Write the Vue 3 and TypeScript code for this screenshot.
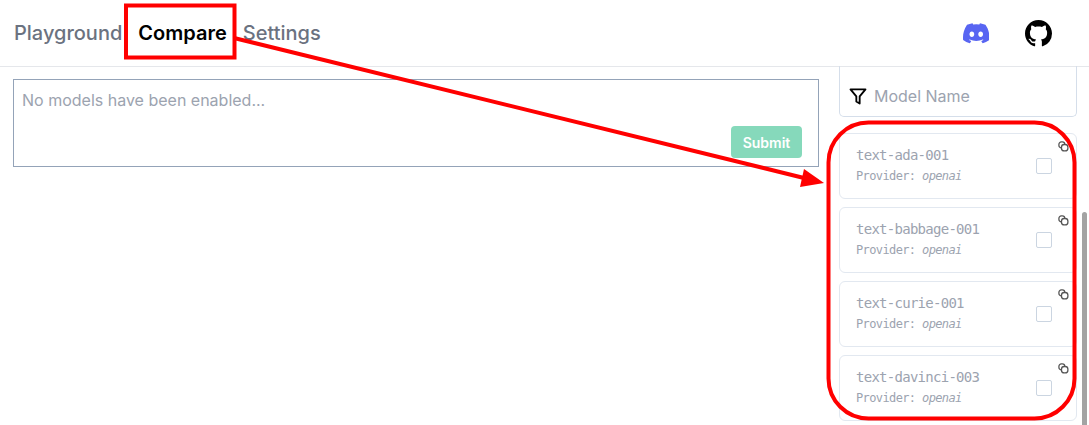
<template>
  <div class="page">
    <header class="topbar">
      <nav class="tabs">
        <a v-for="tab in tabs" :key="tab" class="tab" :class="{ 'tab--active': tab === 'Compare' }">{{ tab }}</a>
      </nav>
      <div class="socials">
        <svg class="discord" viewBox="0 0 24 24" width="26.5" height="26.5" aria-label="Discord">
          <path fill="#5865f2" d="M20.32 4.37a19.8 19.8 0 0 0-4.89-1.52.07.07 0 0 0-.08.04c-.21.38-.45.87-.61 1.25a18.3 18.3 0 0 0-5.49 0 12.6 12.6 0 0 0-.62-1.25.08.08 0 0 0-.08-.04 19.7 19.7 0 0 0-4.89 1.52.07.07 0 0 0-.03.03C.53 9.05-.32 13.58.1 18.06c0 .02.01.04.03.06a19.9 19.9 0 0 0 6 3.03.08.08 0 0 0 .08-.03c.46-.63.87-1.29 1.23-1.99a.08.08 0 0 0-.04-.11 13.1 13.1 0 0 1-1.87-.89.08.08 0 0 1-.01-.13l.37-.29a.07.07 0 0 1 .08-.01c3.93 1.79 8.18 1.79 12.06 0a.07.07 0 0 1 .08.01l.37.29a.08.08 0 0 1-.01.13c-.6.35-1.22.64-1.87.89a.08.08 0 0 0-.04.11c.36.7.78 1.36 1.23 1.99a.08.08 0 0 0 .08.03 19.8 19.8 0 0 0 6-3.03.08.08 0 0 0 .03-.05c.5-5.18-.84-9.67-3.55-13.66a.06.06 0 0 0-.03-.03ZM8.02 15.33c-1.18 0-2.16-1.09-2.16-2.42s.96-2.42 2.16-2.42c1.21 0 2.18 1.1 2.16 2.42 0 1.33-.96 2.42-2.16 2.42Zm7.97 0c-1.18 0-2.16-1.09-2.16-2.42s.96-2.42 2.16-2.42c1.21 0 2.18 1.1 2.16 2.42 0 1.33-.95 2.42-2.16 2.42Z" />
        </svg>
        <svg class="github" viewBox="0 0 16 16" width="27" height="27" aria-label="GitHub">
          <path fill="#000" d="M8 0C3.58 0 0 3.58 0 8c0 3.54 2.29 6.53 5.47 7.59.4.07.55-.17.55-.38 0-.19-.01-.82-.01-1.49-2.01.37-2.53-.49-2.69-.94-.09-.23-.48-.94-.82-1.13-.28-.15-.68-.52-.01-.53.63-.01 1.08.58 1.23.82.72 1.21 1.87.87 2.33.66.07-.52.28-.87.51-1.07-1.78-.2-3.64-.89-3.64-3.95 0-.87.31-1.59.82-2.15-.08-.2-.36-1.02.08-2.12 0 0 .67-.21 2.2.82.64-.18 1.32-.27 2-.27s1.36.09 2 .27c1.53-1.04 2.2-.82 2.2-.82.44 1.1.16 1.92.08 2.12.51.56.82 1.27.82 2.15 0 3.07-1.87 3.75-3.65 3.95.29.25.54.73.54 1.48 0 1.07-.01 1.93-.01 2.2 0 .21.15.46.55.38A8.01 8.01 0 0 0 16 8c0-4.42-3.58-8-8-8Z" />
        </svg>
      </div>
    </header>

    <main class="body">
      <section class="prompt">
        <p class="prompt__placeholder">No models have been enabled...</p>
        <button class="prompt__submit" disabled>Submit</button>
      </section>

      <aside class="models">
        <div class="filter">
          <svg viewBox="0 0 24 24" width="20" height="20" fill="none" stroke="#000" stroke-width="2.2" stroke-linejoin="round">
            <path d="M3 4h18l-7 8.5V21l-4-2.5v-6L3 4Z" />
          </svg>
          <span>Model Name</span>
        </div>
        <ul class="model-list">
          <li v-for="model in models" :key="model" class="card">
            <div class="card__text">
              <div class="card__name">{{ model }}</div>
              <div class="card__provider">Provider: <em>openai</em></div>
            </div>
            <span class="card__check"></span>
            <svg class="card__copy" viewBox="0 0 12 12" width="11" height="11" fill="#fff" stroke="#555" stroke-width="1.4">
              <rect x="1" y="1" width="6.4" height="6.4" rx="2.6" />
              <rect x="3.8" y="3.8" width="7" height="7" rx="3" />
            </svg>
          </li>
        </ul>
      </aside>
      <div class="scrollbar"></div>
    </main>

    <svg class="markup" width="1089" height="425" viewBox="0 0 1089 425">
      <rect x="126" y="5.5" width="108.5" height="52" fill="none" stroke="#f00" stroke-width="4" />
      <line x1="234" y1="38" x2="804" y2="178" stroke="#f00" stroke-width="4" />
      <polygon points="824,183 800,187 804,169" fill="#f00" />
      <rect x="828.5" y="122.5" width="246" height="296" rx="40" fill="none" stroke="#f00" stroke-width="4" />
    </svg>
  </div>
</template>

<script setup lang="ts">
const tabs: string[] = ['Playground', 'Compare', 'Settings'];
const models: string[] = ['text-ada-001', 'text-babbage-001', 'text-curie-001', 'text-davinci-003'];
</script>

<style>
html,
body {
  margin: 0;
  background: #fff;
  overflow: hidden;
}
</style>

<style scoped>
.page {
  position: relative;
  width: 1089px;
  height: 425px;
  overflow: hidden;
  font-family: Inter, "Liberation Sans", sans-serif;
}

.topbar {
  height: 66px;
  display: flex;
  align-items: center;
  justify-content: space-between;
  padding: 0 37px 0 14px;
  border-bottom: 1px solid #e5e7eb;
}

.tabs {
  display: flex;
  gap: 16px;
}

.tab {
  font-size: 20px;
  font-weight: 500;
  color: #6b7280;
}

.tab--active {
  color: #000;
  font-weight: 600;
}

.socials {
  display: flex;
  align-items: center;
  gap: 36px;
}

.body {
  display: flex;
  align-items: flex-start;
  padding-left: 13px;
}

.prompt {
  box-sizing: border-box;
  width: 806px;
  height: 88px;
  margin-top: 12px;
  border: 1px solid #94a3b8;
  display: flex;
  flex-direction: column;
  padding: 11px 16px 0 8px;
}

.prompt__placeholder {
  margin: 0;
  flex: 1;
  font-size: 16px;
  line-height: 19px;
  color: #9ca3af;
}

.prompt__submit {
  align-self: flex-end;
  width: 71px;
  height: 32px;
  margin-bottom: 8px;
  border: 0;
  border-radius: 4px;
  background: #86d9bb;
  color: #fff;
  font: 600 14px Inter, sans-serif;
}

.models {
  width: 238px;
  margin-left: 20px;
}

.filter {
  box-sizing: border-box;
  height: 51px;
  margin-top: -1px;
  padding: 9px 0 0 8px;
  display: flex;
  align-items: center;
  gap: 6px;
  border: 1px solid #d5deea;
  border-top: 0;
  border-radius: 0 0 5px 5px;
  font-size: 16px;
  color: #9ca3af;
}

.model-list {
  list-style: none;
  margin: 16px 0 0;
  padding: 0;
  display: flex;
  flex-direction: column;
  gap: 8px;
}

.card {
  box-sizing: border-box;
  height: 66px;
  position: relative;
  display: flex;
  align-items: center;
  justify-content: space-between;
  padding: 0 24px 0 16px;
  border: 1px solid #e2e8f0;
  border-radius: 6px;
  font-family: "DejaVu Sans Mono", monospace;
  color: #9ca3af;
}

.card__text {
  padding-bottom: 3px;
}

.card__name {
  font-size: 14px;
  letter-spacing: -0.73px;
  line-height: 17px;
  margin-bottom: 5px;
}

.card__provider {
  font-size: 12px;
  letter-spacing: -0.62px;
  line-height: 14px;
}

.card__check {
  box-sizing: border-box;
  width: 16px;
  height: 16px;
  border: 1px solid #cbd5e1;
  border-radius: 2px;
}

.card__copy {
  position: absolute;
  top: 7px;
  right: 7px;
}

.scrollbar {
  position: absolute;
  top: 212px;
  left: 1082px;
  width: 5px;
  height: 213px;
  border-radius: 3px 3px 0 0;
  background: #a3a3a3;
}

.markup {
  position: absolute;
  inset: 0;
  pointer-events: none;
}
</style>
